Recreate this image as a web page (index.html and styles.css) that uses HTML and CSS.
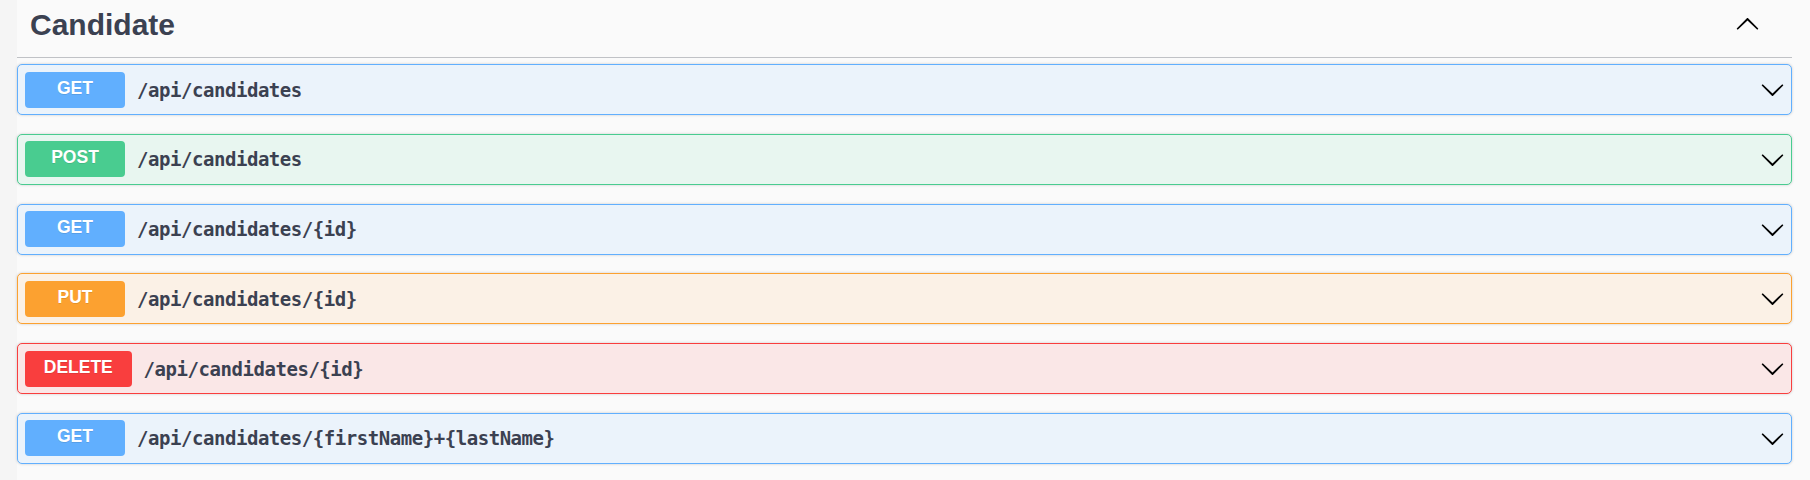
FILE: index.html
```html
<!DOCTYPE html>
<html>
<head>
<meta charset="utf-8">
<title>Candidate</title>
<link rel="stylesheet" href="styles.css">
</head>
<body>
<div class="wrap">
  <section class="tag-section">
    <h3 class="tag">
      <span class="tag-name">Candidate</span>
      <button class="expand" aria-label="collapse">
        <svg class="arrow up" viewBox="0 0 20 20" width="25" height="25"><path d="M17.418 6.109c.272-.268.709-.268.979 0s.271.701 0 .969l-7.908 7.83c-.27.268-.707.268-.979 0l-7.908-7.830c-.27-.268-.27-.701 0-.969.271-.268.709-.268.979 0L10 13.25l7.418-7.141z"/></svg>
      </button>
    </h3>
    <div class="ops">
      <div class="op get">
        <span class="method">GET</span>
        <span class="path">/api/candidates</span>
        <svg class="arrow" viewBox="0 0 20 20" width="25" height="25"><path d="M17.418 6.109c.272-.268.709-.268.979 0s.271.701 0 .969l-7.908 7.83c-.27.268-.707.268-.979 0l-7.908-7.83c-.27-.268-.27-.701 0-.969.271-.268.709-.268.979 0L10 13.25l7.418-7.141z"/></svg>
      </div>
      <div class="op post">
        <span class="method">POST</span>
        <span class="path">/api/candidates</span>
        <svg class="arrow" viewBox="0 0 20 20" width="25" height="25"><path d="M17.418 6.109c.272-.268.709-.268.979 0s.271.701 0 .969l-7.908 7.83c-.27.268-.707.268-.979 0l-7.908-7.83c-.27-.268-.27-.701 0-.969.271-.268.709-.268.979 0L10 13.25l7.418-7.141z"/></svg>
      </div>
      <div class="op get">
        <span class="method">GET</span>
        <span class="path">/api/candidates/{id}</span>
        <svg class="arrow" viewBox="0 0 20 20" width="25" height="25"><path d="M17.418 6.109c.272-.268.709-.268.979 0s.271.701 0 .969l-7.908 7.83c-.27.268-.707.268-.979 0l-7.908-7.83c-.27-.268-.27-.701 0-.969.271-.268.709-.268.979 0L10 13.25l7.418-7.141z"/></svg>
      </div>
      <div class="op put">
        <span class="method">PUT</span>
        <span class="path">/api/candidates/{id}</span>
        <svg class="arrow" viewBox="0 0 20 20" width="25" height="25"><path d="M17.418 6.109c.272-.268.709-.268.979 0s.271.701 0 .969l-7.908 7.83c-.27.268-.707.268-.979 0l-7.908-7.83c-.27-.268-.27-.701 0-.969.271-.268.709-.268.979 0L10 13.25l7.418-7.141z"/></svg>
      </div>
      <div class="op delete">
        <span class="method">DELETE</span>
        <span class="path">/api/candidates/{id}</span>
        <svg class="arrow" viewBox="0 0 20 20" width="25" height="25"><path d="M17.418 6.109c.272-.268.709-.268.979 0s.271.701 0 .969l-7.908 7.83c-.27.268-.707.268-.979 0l-7.908-7.83c-.27-.268-.27-.701 0-.969.271-.268.709-.268.979 0L10 13.25l7.418-7.141z"/></svg>
      </div>
      <div class="op get">
        <span class="method">GET</span>
        <span class="path">/api/candidates/{firstName}+{lastName}</span>
        <svg class="arrow" viewBox="0 0 20 20" width="25" height="25"><path d="M17.418 6.109c.272-.268.709-.268.979 0s.271.701 0 .969l-7.908 7.83c-.27.268-.707.268-.979 0l-7.908-7.83c-.27-.268-.27-.701 0-.969.271-.268.709-.268.979 0L10 13.25l7.418-7.141z"/></svg>
      </div>
    </div>
  </section>
</div>
</body>
</html>
```

FILE: styles.css
```css
html, body {
  margin: 0;
  padding: 0;
}

body {
  background: #f5f5f5;
  font-family: "Liberation Sans", Arial, sans-serif;
  color: #3b4151;
}

.wrap {
  margin-left: 17px;
  padding-right: 18px;
  background: #fafafa;
  min-height: 480px;
}

.tag {
  display: flex;
  align-items: center;
  margin: 0 0 6px;
  height: 58px;
  box-sizing: border-box;
  padding: 0 32px 8px 13px;
  border-bottom: 1px solid rgba(59, 65, 81, 0.3);
  font-size: 30px;
  font-weight: 700;
  color: #3b4151;
}

.tag-name {
  flex: 1;
}

.expand {
  border: none;
  background: none;
  padding: 0;
  margin: 0;
  width: 25px;
  height: 25px;
  display: flex;
}

.arrow {
  display: block;
  fill: #000;
  flex: none;
}

.arrow.up {
  transform: rotate(180deg);
}

.ops {
  display: flex;
  flex-direction: column;
  gap: 18.75px;
}

.op {
  display: flex;
  align-items: center;
  height: 51px;
  box-sizing: border-box;
  padding: 0 6.5px 0 7px;
  border: 1px solid;
  border-radius: 5px;
  box-shadow: 0 0 3px rgba(0, 0, 0, 0.19);
}

.method {
  min-width: 100px;
  height: 36px;
  box-sizing: border-box;
  padding: 0 18.75px 3px;
  line-height: 33px;
  text-align: center;
  border-radius: 4px;
  color: #fff;
  font-family: "Liberation Sans", Arial, sans-serif;
  font-size: 17.5px;
  font-weight: 700;
  text-shadow: 0 1px 0 rgba(0, 0, 0, 0.1);
}

.path {
  flex: 1;
  padding: 0 12px;
  font-family: "DejaVu Sans Mono", "Liberation Mono", monospace;
  font-size: 19px;
  font-weight: 700;
  letter-spacing: -0.45px;
  color: #3b4151;
}

.get {
  border-color: #61affe;
  background: #ebf3fb;
}
.get .method { background: #61affe; }

.post {
  border-color: #49cc90;
  background: #e8f6f0;
}
.post .method { background: #49cc90; }

.put {
  border-color: #fca130;
  background: #fbf1e6;
}
.put .method { background: #fca130; }

.delete {
  border-color: #f93e3e;
  background: #fae7e7;
}
.delete .method { background: #f93e3e; }
```
